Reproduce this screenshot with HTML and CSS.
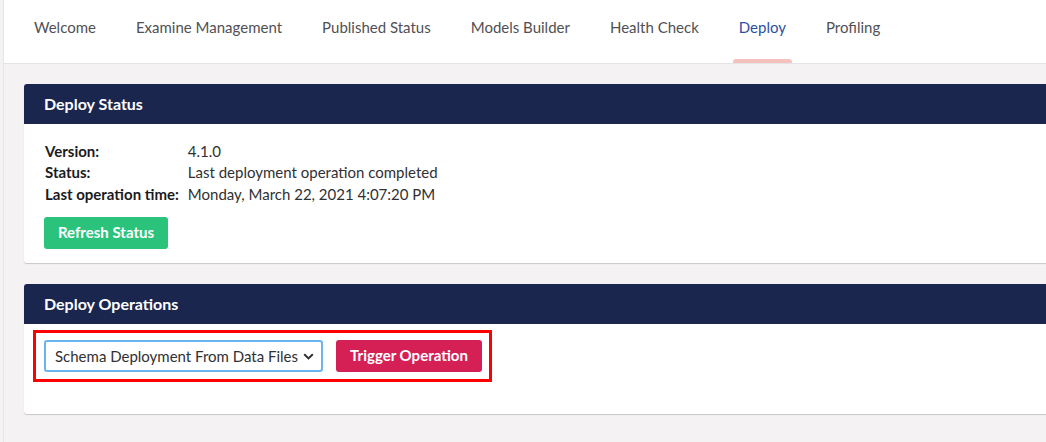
FILE: index.html
```html
<!DOCTYPE html>
<html>
<head>
<meta charset="utf-8">
<link rel="stylesheet" href="styles.css">
</head>
<body>
<div class="app">
  <nav class="tabs">
    <a class="tab">Welcome</a>
    <a class="tab">Examine Management</a>
    <a class="tab">Published Status</a>
    <a class="tab">Models Builder</a>
    <a class="tab">Health Check</a>
    <a class="tab active">Deploy</a>
    <a class="tab">Profiling</a>
  </nav>
  <main class="content">
    <section class="card">
      <header class="card-head">Deploy Status</header>
      <div class="card-body">
        <table class="info">
          <tr><th>Version:</th><td>4.1.0</td></tr>
          <tr><th>Status:</th><td>Last deployment operation completed</td></tr>
          <tr><th>Last operation time:</th><td>Monday, March 22, 2021 4:07:20 PM</td></tr>
        </table>
        <button class="btn btn-green">Refresh Status</button>
      </div>
    </section>
    <section class="card">
      <header class="card-head">Deploy Operations</header>
      <div class="card-body ops-body">
        <div class="highlight">
          <div class="select">
            <span>Schema Deployment From Data Files</span>
            <svg width="11" height="7" viewBox="0 0 11 7"><path d="M1.2 1.3 L5.5 5.4 L9.8 1.3" fill="none" stroke="#303033" stroke-width="2"/></svg>
          </div>
          <button class="btn btn-red">Trigger Operation</button>
        </div>
      </div>
    </section>
  </main>
</div>
</body>
</html>
```
FILE: styles.css
```css
html, body {
  margin: 0;
  padding: 0;
  background: #f4f2f3;
  overflow: hidden;
}
body {
  font-family: Lato, "Open Sans", sans-serif;
  font-size: 15px;
  color: #303033;
}
.app {
  margin-left: 3px;
  border-left: 1px solid #e6e5e7;
  min-height: 442px;
}
.tabs {
  display: flex;
  height: 63px;
  background: #fff;
  border-bottom: 1px solid #e4e3e5;
  padding-left: 10px;
}
.tab {
  display: flex;
  align-items: center;
  padding: 0 20px 10px;
  color: #515054;
  font-size: 15px;
  position: relative;
  line-height: 20px;
}
.tab.active {
  color: #2c4fa3;
}
.tab.active::after {
  content: "";
  position: absolute;
  left: 14px;
  right: 14px;
  bottom: 0;
  height: 4px;
  background: #f5c1bc;
  border-radius: 3px 3px 0 0;
}
.content {
  padding: 20px 0 0 20px;
  margin-right: -60px;
  display: flex;
  flex-direction: column;
  gap: 21px;
}
.card {
  background: #fff;
  border-radius: 3px;
  box-shadow: 0 1px 1px rgba(0,0,0,0.18);
}
.card-head {
  background: #1b264f;
  color: #fff;
  font-weight: 700;
  font-size: 16px;
  height: 40px;
  line-height: 40px;
  padding: 0 20px;
  border-radius: 3px 3px 0 0;
}
.card-body {
  padding: 16px 20px 14px;
}
.info {
  border-collapse: collapse;
  margin-bottom: 12.5px;
}
.info th {
  text-align: left;
  font-weight: 700;
  color: #1b1b1d;
  padding: 0 9px 0 1px;
  height: 21.5px;
  white-space: nowrap;
}
.info td {
  padding: 0;
  height: 21.5px;
}
.btn {
  font-family: Lato, sans-serif;
  font-weight: 700;
  font-size: 15px;
  color: #fff;
  border: 0;
  border-radius: 3px;
  height: 32px;
  padding: 0 0 2px;
  display: block;
  white-space: nowrap;
  text-align: center;
}
.btn-green {
  background: #2bc37c;
  width: 124px;
}
.btn-red {
  background: #d42054;
  width: 146px;
}
.ops-body {
  padding: 6px 20px 32px 9px;
}
.highlight {
  box-sizing: border-box;
  display: flex;
  align-items: center;
  gap: 13px;
  width: 459px;
  height: 52px;
  border: 3px solid #ff0000;
  padding: 0 0 0 8px;
}
.select {
  box-sizing: border-box;
  width: 279px;
  height: 32px;
  border: 2px solid #6ab4f0;
  border-radius: 3px;
  display: flex;
  align-items: center;
  justify-content: space-between;
  padding: 0 7px 0 9px;
  color: #303033;
  font-size: 15px;
}
```
